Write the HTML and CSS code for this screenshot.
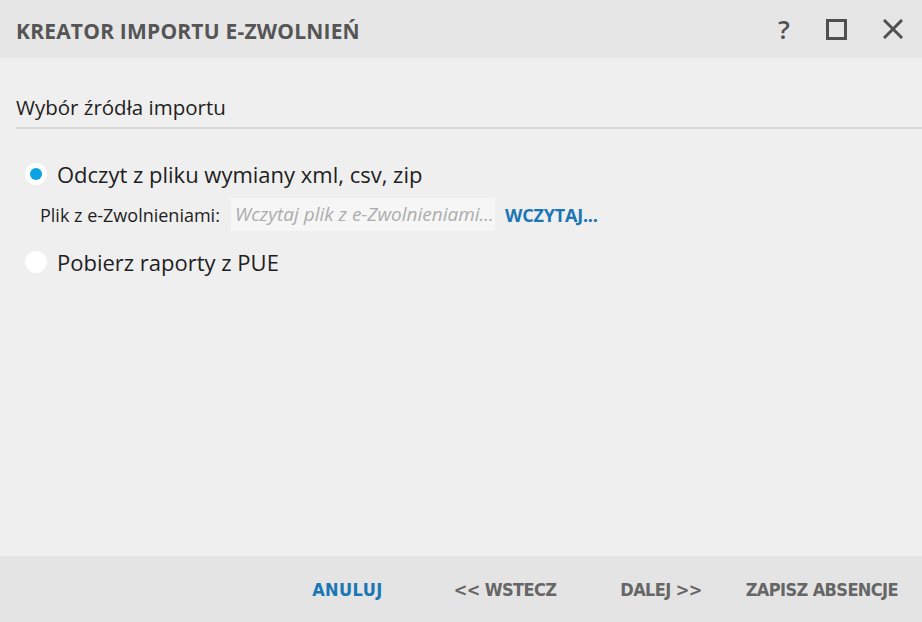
FILE: index.html
```html
<!DOCTYPE html>
<html lang="pl">
<head>
  <meta charset="UTF-8" />
  <title>Kreator importu e-Zwolnień</title>
  <link rel="stylesheet" href="styles.css">
</head>
<body>
  <div class="dialog">
    <header class="titlebar">
      <h1>KREATOR IMPORTU E-ZWOLNIEŃ</h1>
      <div class="tools">
        <span class="tool help">?</span>
        <span class="tool"><svg width="23" height="23" viewBox="0 0 23 23"><rect x="2.5" y="2.5" width="18" height="18" fill="none" stroke="#505050" stroke-width="3"/></svg></span>
        <span class="tool"><svg width="20" height="20" viewBox="0 0 20 20"><path d="M2 2 L18 18 M18 2 L2 18" stroke="#505050" stroke-width="3" stroke-linecap="square"/></svg></span>
      </div>
    </header>

    <main class="content">
      <h2 class="section-title">Wybór źródła importu</h2>

      <label class="option">
        <span class="radio checked"></span>
        Odczyt z pliku wymiany xml, csv, zip
      </label>
      <div class="file-row">
        <span class="file-label">Plik z e-Zwolnieniami:</span>
        <span class="file-input">Wczytaj plik z e-Zwolnieniami...</span>
        <a href="#" class="file-load">WCZYTAJ...</a>
      </div>
      <label class="option">
        <span class="radio"></span>
        Pobierz raporty z PUE
      </label>
    </main>

    <footer class="actions">
      <a href="#" class="btn primary">ANULUJ</a>
      <a href="#" class="btn back">&lt;&lt; WSTECZ</a>
      <a href="#" class="btn next">DALEJ &gt;&gt;</a>
      <a href="#" class="btn save">ZAPISZ ABSENCJE</a>
    </footer>
  </div>
</body>
</html>
```

FILE: styles.css
```css
* {
  margin: 0;
  padding: 0;
  box-sizing: border-box;
}

body {
  font-family: 'Open Sans', 'Noto Sans', sans-serif;
  background: #efefef;
  color: #222;
  width: 922px;
  height: 622px;
  overflow: hidden;
}

.dialog {
  display: flex;
  flex-direction: column;
  height: 622px;
}

.titlebar {
  height: 58px;
  background: #e6e6e6;
  display: flex;
  align-items: center;
  justify-content: space-between;
  padding: 0 19px 0 16px;
}

.titlebar h1 {
  font-size: 21px;
  font-weight: 700;
  color: #555;
  line-height: 26px;
  margin-top: 4px;
  letter-spacing: 0.2px;
}

.tools {
  display: flex;
  align-items: center;
  gap: 35px;
}

.tool {
  display: flex;
  align-items: center;
  justify-content: center;
  color: #505050;
}

.tool.help {
  font-size: 26px;
  font-weight: 600;
  width: 12px;
  line-height: 26px;
}

.content {
  flex: 1;
  padding: 37px 0 0 16px;
}

.section-title {
  font-size: 20.5px;
  font-weight: 400;
  color: #1e1e1e;
  line-height: 24px;
  padding-bottom: 8px;
  border-bottom: 2px solid #d8d8d8;
  margin-bottom: 32px;
}

.option {
  display: flex;
  align-items: center;
  gap: 10px;
  font-size: 22px;
  color: #1e1e1e;
  padding-left: 9px;
  line-height: 26px;
}

.radio {
  width: 22px;
  height: 22px;
  border-radius: 50%;
  background: #fff;
  display: flex;
  align-items: center;
  justify-content: center;
}

.radio.checked::after {
  content: "";
  width: 12px;
  height: 12px;
  border-radius: 50%;
  background: #0aa3e3;
}

.file-row {
  display: flex;
  align-items: center;
  margin: 11px 0 18px 24px;
  font-size: 18px;
}

.file-label {
  width: 191px;
  color: #1e1e1e;
}

.file-input {
  width: 264px;
  height: 33px;
  line-height: 33px;
  background: #f6f6f6;
  color: #adadad;
  font-size: 19px;
  font-style: italic;
  padding-left: 4px;
  white-space: nowrap;
  overflow: hidden;
}

.file-load {
  margin-left: 10px;
  color: #1a76b4;
  font-weight: 700;
  text-decoration: none;
  letter-spacing: -0.2px;
}

.actions {
  height: 66px;
  background: #e4e4e4;
  display: flex;
  align-items: center;
  justify-content: flex-end;
  padding: 0 24px 0 0;
}

.btn {
  font-family: 'DejaVu Sans Condensed', 'DejaVu Sans', sans-serif;
  font-stretch: condensed;
  font-size: 18px;
  font-weight: 700;
  color: #666;
  text-decoration: none;
  letter-spacing: -0.6px;
}

.btn.primary {
  color: #1a76b4;
  letter-spacing: 0.4px;
}

.btn.back {
  margin-left: 71px;
}

.btn.next {
  margin-left: 64px;
}

.btn.save {
  margin-left: 44px;
}
```
